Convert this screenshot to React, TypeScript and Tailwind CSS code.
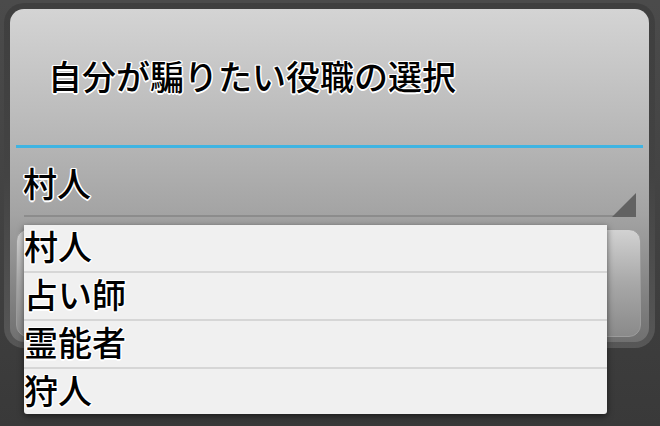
import React from "react";

const outline =
  "[text-shadow:1px_1px_0_#fff,-1px_-1px_0_#fff,1px_-1px_0_#fff,-1px_1px_0_#fff,0_1.5px_0_#fff,0_-1.5px_0_#fff,1.5px_0_0_#fff,-1.5px_0_0_#fff]";

const font = "font-['Noto_Sans_CJK_JP','Noto_Sans_CJK_SC',sans-serif]";

const items = ["村人", "占い師", "霊能者", "狩人"];

export default function App() {
  return (
    <div
      className={`relative w-[660px] h-[426px] overflow-hidden bg-gradient-to-b from-[#4b4b4b] to-[#393939] ${font}`}
    >
      {/* dialog frame */}
      <div className="ml-[4px] mt-[3px] w-[651px] h-[345px] rounded-[20px] bg-gradient-to-b from-[#3f3f3f] via-[#434343] to-[#575757] p-[6px]">
        <div className="flex h-full flex-col overflow-hidden rounded-[14px] bg-[linear-gradient(to_bottom,#d4d4d4_0%,#b5b5b5_41%,#a3a3a3_62%,#8a8a8a_80%,#707070_100%)]">
          {/* title */}
          <div className="h-[136px] pl-[38px] pt-[50px]">
            <div className={`text-[34px] font-medium leading-none text-black ${outline}`}>
              自分が騙りたい役職の選択
            </div>
          </div>
          {/* blue divider */}
          <div className="mx-[6px] h-[3px] bg-[#3fb4e2]" />
          {/* spinner */}
          <div className="flex h-[80px] flex-col">
            <div className="pl-[13px] pt-[18px]">
              <div className={`text-[34px] font-medium leading-none text-black ${outline}`}>村人</div>
            </div>
            <div className="relative ml-[14px] mr-[13px] mt-[15px]">
              <svg
                className="absolute right-0 bottom-0"
                width="24"
                height="24"
                viewBox="0 0 24 24"
              >
                <polygon points="0,24 24,24 24,0" fill="#626262" />
              </svg>
              <div className="h-[2px] bg-[#8c8c8c]" />
            </div>
          </div>
          {/* button bar */}
          <div className="flex flex-1 pl-[6px] pr-[8px] pt-[1px] pb-[5px]">
            <div className="flex-1 rounded-[12px] border border-[#9c9c9c] bg-gradient-to-b from-[#d2d2d2] via-[#a8a8a8] to-[#8a8a8a]" />
          </div>
        </div>
      </div>

      {/* dropdown list */}
      <div className="absolute left-[24px] top-[225px] w-[583px] overflow-hidden rounded-b-[3px] bg-[#f0f0f0] shadow-[0_2px_6px_rgba(0,0,0,0.55)]">
        {items.map((t, i) => (
          <div
            key={t}
            className={`box-border pt-[4px] ${
              i < items.length - 1 ? "h-[48px] border-b-2 border-[#d6d6d6]" : "h-[45px]"
            }`}
          >
            <div className={`text-[34px] font-medium leading-none text-black ${outline}`}>{t}</div>
          </div>
        ))}
      </div>
    </div>
  );
}
